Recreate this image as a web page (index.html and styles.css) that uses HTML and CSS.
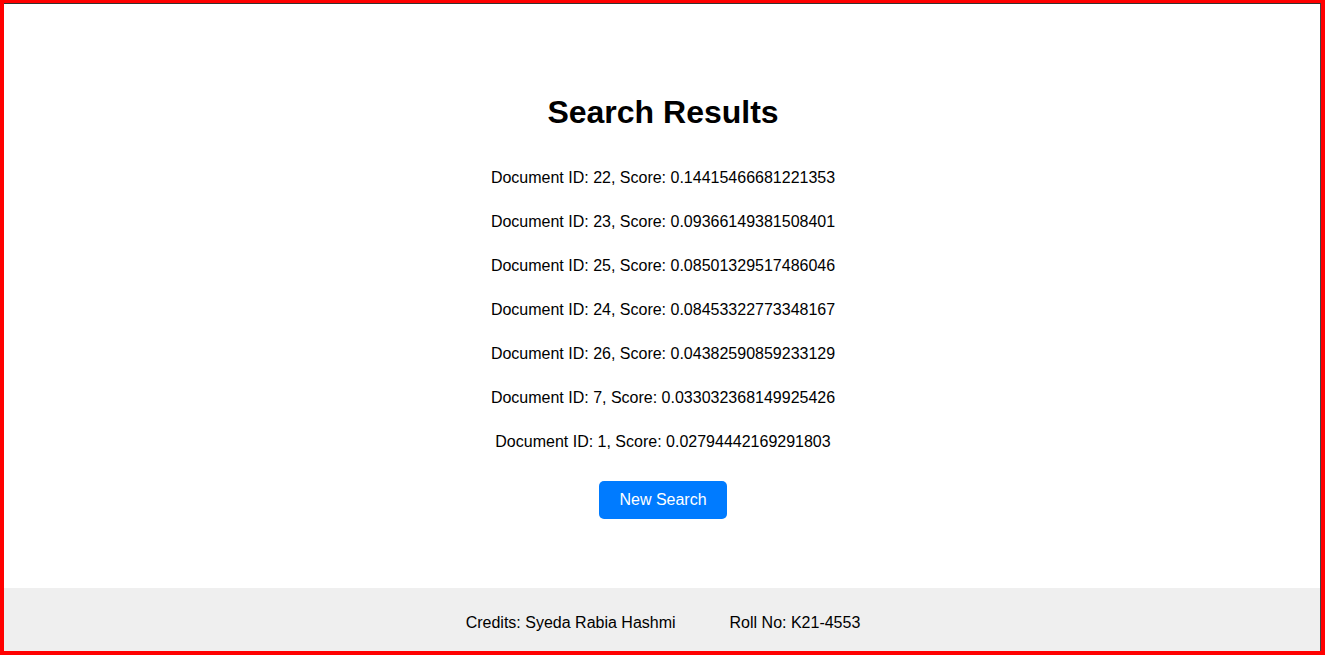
FILE: index.html
```html
<!DOCTYPE html>
<html lang="en">
<head>
<meta charset="utf-8">
<title>Search Results</title>
<link rel="stylesheet" href="styles.css">
</head>
<body>
<div class="frame">
  <div class="page">
    <main class="results">
      <h1 class="title">Search Results</h1>
      <div class="list">
        <p class="row">Document ID: 22, Score: 0.14415466681221353</p>
        <p class="row">Document ID: 23, Score: 0.09366149381508401</p>
        <p class="row">Document ID: 25, Score: 0.08501329517486046</p>
        <p class="row">Document ID: 24, Score: 0.08453322773348167</p>
        <p class="row">Document ID: 26, Score: 0.04382590859233129</p>
        <p class="row">Document ID: 7, Score: 0.033032368149925426</p>
        <p class="row">Document ID: 1, Score: 0.02794442169291803</p>
      </div>
      <a class="btn" href="#">New Search</a>
    </main>
    <footer class="footer">
      <span>Credits: Syeda Rabia Hashmi</span>
      <span>Roll No: K21-4553</span>
    </footer>
  </div>
</div>
</body>
</html>
```
FILE: styles.css
```css
* { box-sizing: border-box; }
html, body { margin: 0; padding: 0; }
body {
  font-family: "Liberation Sans", Arial, sans-serif;
  color: #000;
  background: #fff;
}
.frame {
  height: 655px;
  width: 1325px;
  border-style: solid;
  border-color: #ff0000;
  border-width: 3px 4px 4px 4px;
}
.page {
  height: 100%;
  display: flex;
  flex-direction: column;
  border-top: 1px solid #333;
  border-right: 1px solid #444;
}
.results {
  flex: 1;
  display: flex;
  flex-direction: column;
  align-items: center;
  padding-top: 90px;
  padding-left: 2px;
}
.title {
  margin: 0;
  font-size: 32px;
  line-height: 37px;
  font-weight: bold;
}
.list {
  margin-top: 38px;
  display: flex;
  flex-direction: column;
  align-items: center;
  gap: 26px;
}
.row {
  margin: 0;
  font-size: 16px;
  line-height: 18px;
}
.btn {
  margin-top: 30px;
  display: inline-block;
  background: #007bff;
  color: #fff;
  text-decoration: none;
  font-size: 16px;
  line-height: 18px;
  padding: 10px 20px;
  border-radius: 5px;
}
.footer {
  height: 63px;
  background: #efefef;
  display: flex;
  justify-content: center;
  align-items: center;
  gap: 54px;
  padding-top: 7px;
  padding-left: 2px;
  font-size: 16px;
}
```
